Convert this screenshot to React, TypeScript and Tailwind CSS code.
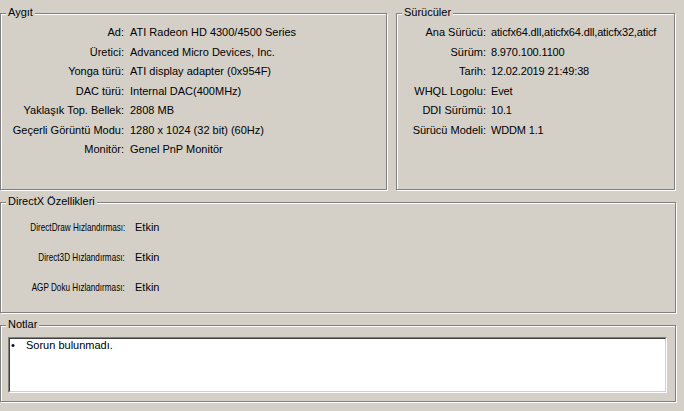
const etched =
  "relative border border-[#808080] shadow-[inset_1px_1px_0_#fff,1px_1px_0_#fff]";

const Legend = ({ children }: { children: string }) => (
  <span className="absolute left-[5px] top-[-8px] bg-[#d4d0c8] px-[2px] leading-[13px]">
    {children}
  </span>
);

const device: [string, string][] = [
  ["Ad:", "ATI Radeon HD 4300/4500 Series"],
  ["Üretici:", "Advanced Micro Devices, Inc."],
  ["Yonga türü:", "ATI display adapter (0x954F)"],
  ["DAC türü:", "Internal DAC(400MHz)"],
  ["Yaklaşık Top. Bellek:", "2808 MB"],
  ["Geçerli Görüntü Modu:", "1280 x 1024 (32 bit) (60Hz)"],
  ["Monitör:", "Genel PnP Monitör"],
];

const drivers: [string, string][] = [
  ["Ana Sürücü:", "aticfx64.dll,aticfx64.dll,aticfx32,aticf"],
  ["Sürüm:", "8.970.100.1100"],
  ["Tarih:", "12.02.2019 21:49:38"],
  ["WHQL Logolu:", "Evet"],
  ["DDI Sürümü:", "10.1"],
  ["Sürücü Modeli:", "WDDM 1.1"],
];

const features: [string, string][] = [
  ["DirectDraw Hızlandırması:", "Etkin"],
  ["Direct3D Hızlandırması:", "Etkin"],
  ["AGP Doku Hızlandırması:", "Etkin"],
];

export default function App() {
  return (
    <div
      className="w-[684px] h-[411px] bg-[#d4d0c8] text-black text-[11px] pt-[13px] overflow-hidden"
      style={{ fontFamily: '"Liberation Sans", Arial, sans-serif' }}
    >
      <div className="flex">
        <div className={`${etched} w-[387px] h-[177px] pt-[9px]`}>
          <Legend>Aygıt</Legend>
          {device.map(([k, v]) => (
            <div key={k} className="flex leading-[19.5px]">
              <span className="w-[123px] text-right whitespace-nowrap">{k}</span>
              <span className="ml-[6px] whitespace-nowrap">{v}</span>
            </div>
          ))}
        </div>
        <div className={`${etched} ml-[9px] w-[279px] h-[177px] pt-[9px]`}>
          <Legend>Sürücüler</Legend>
          {drivers.map(([k, v]) => (
            <div key={k} className="flex leading-[19.5px]">
              <span className="w-[89px] shrink-0 text-right whitespace-nowrap">{k}</span>
              <span className="ml-[5px] whitespace-nowrap tracking-[-0.15px]">{v}</span>
            </div>
          ))}
        </div>
      </div>

      <div className={`${etched} mt-[12px] w-[676px] h-[111px] pt-[9px]`}>
        <Legend>DirectX Özellikleri</Legend>
        {features.map(([k, v]) => (
          <div key={k} className="flex leading-[30px] h-[30px]">
            <span className="w-[124px] flex justify-end">
              <span className="inline-block whitespace-nowrap origin-right scale-x-[0.74]">
                {k}
              </span>
            </span>
            <span className="ml-[10px]">{v}</span>
          </div>
        ))}
      </div>

      <div className={`${etched} mt-[12px] w-[676px] h-[77px] pt-[11px] pl-[7px]`}>
        <Legend>Notlar</Legend>
        <div className="w-[659px] h-[56px] bg-white border border-t-[#808080] border-l-[#808080] border-b-white border-r-white">
          <div className="h-full border border-t-[#404040] border-l-[#404040] border-b-[#d4d0c8] border-r-[#d4d0c8] flex leading-[13px]">
            <span className="w-[16px] pl-[1px]">•</span>
            <span>Sorun bulunmadı.</span>
          </div>
        </div>
      </div>
    </div>
  );
}
